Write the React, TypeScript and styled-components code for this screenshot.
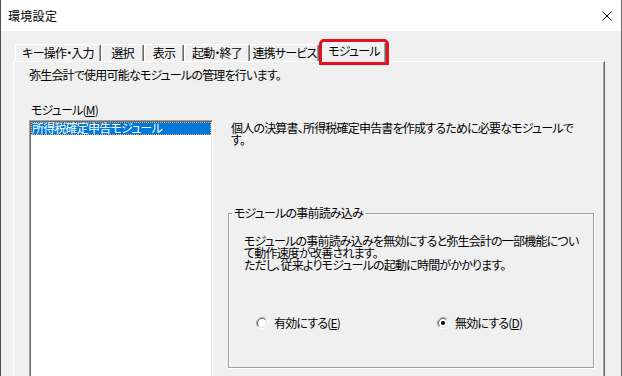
import React from "react";
import styled, { createGlobalStyle } from "styled-components";

const GlobalStyle = createGlobalStyle`
  html, body {
    margin: 0;
    padding: 0;
    background: #f0f0f0;
  }
  body {
    font-family: "Noto Sans CJK JP", "Noto Sans", sans-serif;
    font-size: 12px;
    color: #000;
    font-feature-settings: "palt";
    letter-spacing: -0.8px;
  }
`;

const Window = styled.div`
  width: 622px;
  height: 376px;
  box-sizing: border-box;
  border-left: 1px solid #4f4f4f;
  border-right: 1px solid #6a6a6a;
  display: flex;
  flex-direction: column;
  overflow: hidden;
`;

const TitleBar = styled.div`
  height: 31px;
  flex: none;
  background: #fff;
  display: flex;
  align-items: center;
  justify-content: space-between;
  padding: 0 9px 0 7px;
`;

const Title = styled.span`
  font-size: 12px;
  line-height: 14px;
  margin-top: 1px;
  letter-spacing: 0.3px;
`;

const CloseButton = styled.span`
  display: flex;
  width: 10px;
  height: 10px;
`;

const Body = styled.div`
  flex: 1;
  background: #f0f0f0;
  padding: 11px 16px 0 12px;
  display: flex;
  flex-direction: column;
  min-height: 0;
`;

const TabStrip = styled.div`
  display: flex;
  align-items: flex-end;
  height: 19px;
  padding-left: 2px;
  flex: none;
`;

const Tab = styled.div<{ $w: number; $active?: boolean }>`
  width: ${(p) => p.$w}px;
  height: ${(p) => (p.$active ? 20 : 17)}px;
  margin-left: ${(p) => (p.$active ? 3 : 0)}px;
  margin-bottom: ${(p) => (p.$active ? -1 : 0)}px;
  box-sizing: border-box;
  background: #f0f0f0;
  border-top: 1px solid #fff;
  border-left: 1px solid #fff;
  border-right: 1px solid #696969;
  border-radius: 2px 2px 0 0;
  box-shadow: inset -1px 0 0 #a0a0a0;
  text-align: center;
  line-height: ${(p) => (p.$active ? 16 : 15)}px;
  white-space: nowrap;
  position: relative;
  z-index: 1;
  outline: ${(p) => (p.$active ? "3px solid #e8101a" : "none")};
`;

const TabPage = styled.div`
  flex: 1;
  border-top: 1px solid #fff;
  border-left: 1px solid #fff;
  border-right: 1px solid #696969;
  box-shadow: inset -1px 0 0 #a0a0a0;
  padding: 7px 0 0 15px;
  min-height: 0;
`;

const Intro = styled.div`
  line-height: 12px;
  white-space: nowrap;
`;

const Columns = styled.div`
  display: flex;
  gap: 15px;
  margin-top: 23px;
`;

const LeftColumn = styled.div`
  width: 184px;
  flex: none;
  display: flex;
  flex-direction: column;
`;

const FieldLabel = styled.div`
  line-height: 12px;
  margin-bottom: 4px;
  padding-left: 2px;
`;

const ListBox = styled.div`
  height: 300px;
  background: #fff;
  border-top: 1px solid #a0a0a0;
  border-left: 1px solid #a0a0a0;
  border-right: 1px solid #fff;
  box-shadow: inset 1px 1px 0 #696969, inset -1px 0 0 #e3e3e3;
  padding: 1px 1px 0 1px;
`;

const ListItem = styled.div<{ $selected?: boolean }>`
  height: 13px;
  line-height: 12px;
  box-sizing: border-box;
  padding-left: 1px;
  background: ${(p) => (p.$selected ? "#0078d7" : "transparent")};
  color: ${(p) => (p.$selected ? "#fff" : "#000")};
  outline: ${(p) => (p.$selected ? "1px dotted #f6a04c" : "none")};
  outline-offset: -1px;
  white-space: nowrap;
`;

const RightColumn = styled.div`
  width: 366px;
  flex: none;
  display: flex;
  flex-direction: column;
`;

const Description = styled.p`
  margin: 18px 0 0;
  padding-left: 3px;
  line-height: 12px;
  white-space: nowrap;
`;

const GroupBox = styled.div`
  margin-top: 67px;
  height: 155px;
  box-sizing: border-box;
  border: 1px solid #a0a0a0;
  box-shadow: 1px 1px 0 #fff, inset 1px 1px 0 #fff;
  display: flex;
  flex-direction: column;
`;

const GroupLegend = styled.span`
  align-self: flex-start;
  margin: -7px 0 0 3px;
  padding: 0 2px;
  background: #f0f0f0;
  line-height: 12px;
`;

const GroupText = styled.p`
  margin: 16px 0 0;
  padding-left: 15px;
  line-height: 12px;
  white-space: nowrap;
`;

const RadioRow = styled.div`
  display: flex;
  margin-top: 45px;
  padding-left: 27px;
`;

const RadioOption = styled.label<{ $w?: number }>`
  display: flex;
  align-items: center;
  gap: 6px;
  width: ${(p) => (p.$w ? `${p.$w}px` : "auto")};
  line-height: 13px;
  white-space: nowrap;
`;

const AccessKey = styled.span`
  text-decoration: underline;
  text-underline-offset: 1px;
`;

const RadioMark: React.FC<{ checked?: boolean }> = ({ checked }) => (
  <svg width="12" height="12" viewBox="0 0 12 12">
    <circle cx="6" cy="6" r="5" fill="#fff" />
    <path d="M2.11 9.89 A5.5 5.5 0 0 1 9.89 2.11" fill="none" stroke="#a0a0a0" strokeWidth="1" />
    <path d="M9.89 2.11 A5.5 5.5 0 0 1 2.11 9.89" fill="none" stroke="#fff" strokeWidth="1" />
    <path d="M2.82 9.18 A4.5 4.5 0 0 1 9.18 2.82" fill="none" stroke="#696969" strokeWidth="1" />
    <path d="M9.18 2.82 A4.5 4.5 0 0 1 2.82 9.18" fill="none" stroke="#e3e3e3" strokeWidth="1" />
    {checked && <circle cx="6" cy="6" r="2" fill="#000" />}
  </svg>
);

const tabs = [
  { label: "キー操作・入力", w: 86 },
  { label: "選択", w: 43 },
  { label: "表示", w: 40 },
  { label: "起動・終了", w: 66 },
  { label: "連携サービス", w: 69 },
];

const App: React.FC = () => {
  return (
    <>
      <GlobalStyle />
      <Window>
        <TitleBar>
          <Title>環境設定</Title>
          <CloseButton>
            <svg width="10" height="10" viewBox="0 0 10 10">
              <path d="M0.5 0.5 L9.5 9.5 M9.5 0.5 L0.5 9.5" stroke="#000" strokeWidth="1" />
            </svg>
          </CloseButton>
        </TitleBar>
        <Body>
          <TabStrip>
            {tabs.map((t) => (
              <Tab key={t.label} $w={t.w}>
                {t.label}
              </Tab>
            ))}
            <Tab $w={64} $active>
              モジュール
            </Tab>
          </TabStrip>
          <TabPage>
            <Intro>弥生会計で使用可能なモジュールの管理を行います。</Intro>
            <Columns>
              <LeftColumn>
                <FieldLabel>
                  モジュール(<AccessKey>M</AccessKey>)
                </FieldLabel>
                <ListBox>
                  <ListItem $selected>所得税確定申告モジュール</ListItem>
                </ListBox>
              </LeftColumn>
              <RightColumn>
                <Description>
                  個人の決算書、所得税確定申告書を作成するために必要なモジュールで
                  <br />
                  す。
                </Description>
                <GroupBox>
                  <GroupLegend>モジュールの事前読み込み</GroupLegend>
                  <GroupText>
                    モジュールの事前読み込みを無効にすると弥生会計の一部機能につい
                    <br />
                    て動作速度が改善されます。
                    <br />
                    ただし、従来よりモジュールの起動に時間がかかります。
                  </GroupText>
                  <RadioRow>
                    <RadioOption $w={181}>
                      <RadioMark />
                      <span>
                        有効にする(<AccessKey>E</AccessKey>)
                      </span>
                    </RadioOption>
                    <RadioOption>
                      <RadioMark checked />
                      <span>
                        無効にする(<AccessKey>D</AccessKey>)
                      </span>
                    </RadioOption>
                  </RadioRow>
                </GroupBox>
              </RightColumn>
            </Columns>
          </TabPage>
        </Body>
      </Window>
    </>
  );
};

export default App;
